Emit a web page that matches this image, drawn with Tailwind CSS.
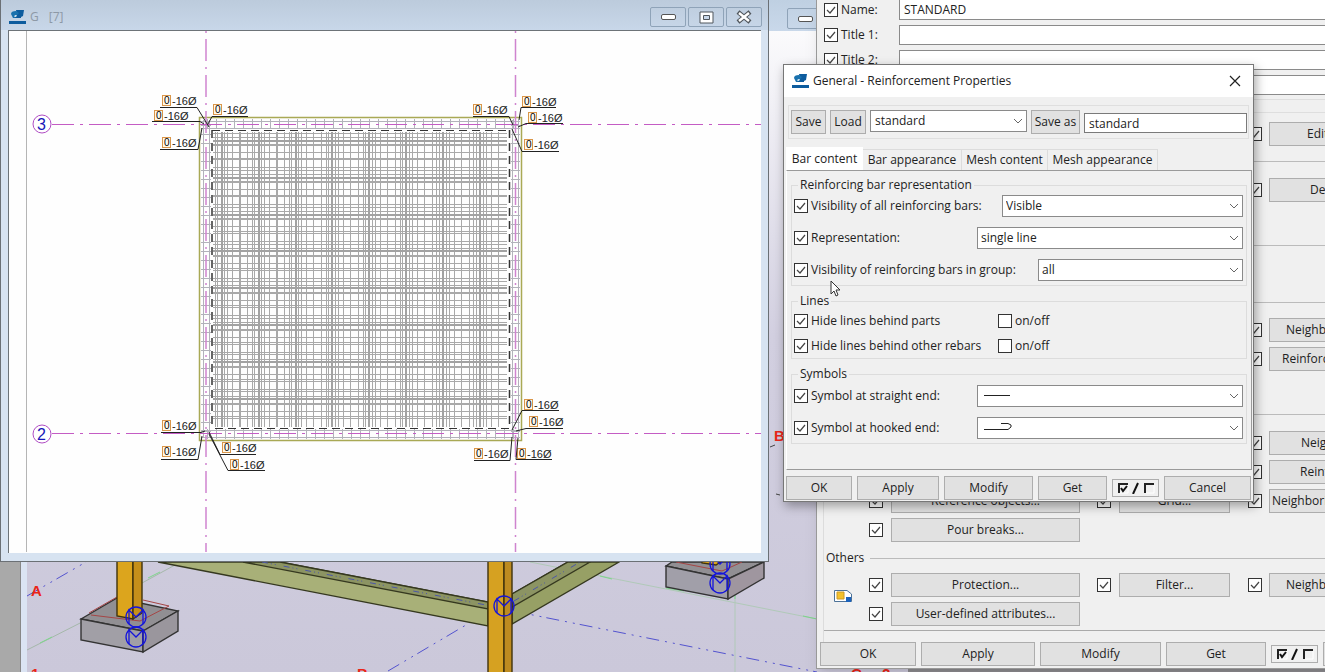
<!DOCTYPE html>
<html lang="en">
<head>
  <meta charset="UTF-8">
  <meta name="viewport" content="width=device-width, initial-scale=1.0">
  <title>General - Reinforcement Properties</title>
  <script src="https://cdn.jsdelivr.net/npm/@tailwindcss/browser@4"></script>
</head>
<body class="overflow-hidden font-['Open_Sans','Noto_Sans',sans-serif] text-xs text-[#222]">
  <!-- Shared icons -->
  <svg class="hidden">
    <symbol id="tick" viewBox="0 0 14 14"><path d="M3 7 L6 10 L11 4" fill="none" stroke="#444" stroke-width="1.2"/></symbol>
    <symbol id="chevron" viewBox="0 0 10 6"><path d="M1 1 L5 5 L9 1" fill="none" stroke="#666"/></symbol>
    <symbol id="logo" viewBox="0 0 17 15">
      <path d="M0 11h17v3H0z M7 0h8l-1 6-2 1v1H5V7l3-2z" fill="#0d5c9e"/>
      <path d="M2 4q0-3 5-3l3 2-3 3-1 2H4z" fill="#1a72ae"/>
      <path d="M5 6l2-1 1 1-2 1z" fill="#fff"/>
    </symbol>
    <symbol id="onoff" viewBox="0 0 38 12">
      <path d="M2 11V2h9 M28 11V2h9" fill="none" stroke="#222" stroke-width="2"/>
      <path d="M3 11h8V3 M29 11h8V3" fill="none" stroke="#fff"/>
      <path d="M4 6l2 3 4-5 M16 12l5-11" fill="none" stroke="#111" stroke-width="2"/>
    </symbol>
    <symbol id="node" viewBox="-12 -12 24 24">
      <circle r="10" fill="none" stroke="#1414dc" stroke-width="1.3"/>
      <path d="M-7 7V-7L0 0L7 -7V7" fill="none" stroke="#1414dc" stroke-width="1.3"/>
    </symbol>
  </svg>

  <main class="relative min-h-screen overflow-hidden bg-[#a9a9a9]">
    <!-- Model view -->
    <section class="absolute inset-y-0 left-5 right-0 bg-linear-to-b from-white via-[#d2cfe0] to-[#cbc8da] border-l border-[#888]">
      <div class="h-[31px] bg-linear-to-b from-[#bfd0e2] to-[#c9d8ea]">
        <button aria-label="Minimize model view" class="absolute left-[766px] top-2 w-9 h-[21px] border border-[#8fa3b8] rounded-xs grid place-items-center">
          <span class="w-[15px] h-[6px] border border-[#555] bg-white rounded-xs"></span>
        </button>
      </div>
      <div class="absolute left-0 top-0 bottom-0 w-[6px] bg-[#dbe4f3]"></div>
    </section>
    <svg class="absolute left-0 top-0" width="1325" height="672" aria-hidden="true">
      <g fill="none">
        <path d="M27 650L90 618M142 583L175 565" stroke="#a5b8aa"/>
        <path d="M40 643l12-6M148 578l12-6" stroke="#7dd68b"/>
        <path d="M530 562L817 619M735 585V672" stroke="#b0c9b8"/>
        <path d="M600 576l12 3M666 588l18 3M803 616l14 3M735 585v14" stroke="#7dd68b"/>
        <path d="M27 596L86 562M388 671L488 612M513 611L817 672" stroke="#5353cf" stroke-dasharray="13 6 2 6 2 5"/>
        <path d="M770 447l5-2M776 494l4 1" stroke="#444"/>
      </g>
      <g stroke="#35381f" stroke-width="1.4">
        <path d="M158 562H280L488 602V626Z" fill="#a8b078"/>
        <path d="M243 562H280L488 602V609Z" fill="#8c9463"/>
        <path d="M512 594L568 562H619L512 624Z" fill="#97a065"/>
        <path d="M512 594L568 562H590L512 607Z" fill="#8c9463"/>
      </g>
      <path d="M262 562L486 605M514 601L580 562" fill="none" stroke="#4c57a8" stroke-dasharray="6 3 1 3 1 8"/>
      <g stroke="#333" stroke-width="1.4">
        <path d="M81 619L117 598L178 611L143 631Z" fill="#918f93"/>
        <path d="M81 619L143 631V652L81 640Z" fill="#a19fa6"/>
        <path d="M143 631L178 611V631L143 652Z" fill="#9a969d"/>
        <path d="M666 566L672 562H764L728 579Z" fill="#918f93"/>
        <path d="M666 566L728 579V599L666 587Z" fill="#a19fa9"/>
        <path d="M728 579L764 562V578L728 599Z" fill="#9f969f"/>
      </g>
      <path d="M89 613L117 597M91 615L140 621L169 606L143 600M676 562L722 571L742 562" fill="none" stroke="#a54545"/>
      <g stroke="#3f320c" stroke-width="1.4">
        <path d="M117 555V616L133 619V555Z" fill="#dca51d"/>
        <path d="M133 555V619L142 613V555Z" fill="#c58f1a"/>
        <path d="M488 555V680H504V555Z" fill="#d6a121"/>
        <path d="M504 555V680H512V555Z" fill="#bd8b20"/>
        <path d="M702 555V563L716 565L722 561V555Z" fill="#dca51d"/>
      </g>
      <use href="#node" x="124" y="605" width="24" height="24"/>
      <use href="#node" x="124" y="625" width="24" height="24"/>
      <use href="#node" x="492" y="594" width="24" height="24"/>
      <use href="#node" x="708" y="552" width="24" height="24"/>
      <use href="#node" x="708" y="571" width="24" height="24"/>
      <g fill="#ea2518" class="font-['Liberation_Sans',sans-serif] text-[15px] font-bold">
        <text x="31" y="596">A</text>
        <text x="31" y="679">1</text>
        <text x="357" y="679">B</text>
        <text x="774" y="441">B</text>
        <text x="851" y="679">C</text>
        <text x="882" y="679">2</text>
      </g>
      <path d="M908 668H1325V672H908Z" fill="#8d8b8f"/>
    </svg>

    <!-- Drawing window -->
    <section class="absolute left-0 top-0 w-[769px] h-[562px] flex flex-col bg-[#d7e3f1] border border-t-0 border-[#6b7075] pl-[7px] pr-[7px] pb-2">
      <header class="-mx-[7px] h-[30px] shrink-0 flex items-center gap-1 pl-2 pr-[6px] pt-1 bg-linear-to-b from-[#bccbdc] to-[#c8d7e9] text-[#8d99a6]">
        <svg class="w-[17px] h-[15px]"><use href="#logo"/></svg>
        <h2 class="flex gap-[10px] text-xs"><span>G</span><span>[7]</span></h2>
        <div class="ml-auto flex gap-[2px]">
          <button aria-label="Minimize" class="w-9 h-5 border border-[#8fa3b8] rounded-xs grid place-items-center"><span class="w-[15px] h-[6px] border border-[#555] bg-white rounded-xs"></span></button>
          <button aria-label="Maximize" class="w-9 h-5 border border-[#8fa3b8] rounded-xs grid place-items-center">
            <svg width="15" height="13"><path d="M1 1h13v11H1z" fill="#fff" stroke="#50565c"/><path d="M4.500 4.500h6v4h-6z" fill="#c8d7e9" stroke="#50565c"/></svg>
          </button>
          <button aria-label="Close" class="w-9 h-5 border border-[#8fa3b8] rounded-xs grid place-items-center">
            <svg width="16" height="14"><path d="M2 2L14 12M14 2L2 12" stroke="#50565c" stroke-width="4.500"/><path d="M3 3L13 11M13 3L3 11" stroke="#fff" stroke-width="2.500"/></svg>
          </button>
        </div>
      </header>
      <div class="grow overflow-hidden border-t border-l border-t-[#6d7378] border-l-[#6d7378] bg-[#fefefe]">
        <svg id="sheet" width="753" height="522" viewBox="9 31 753 522" class="font-['Liberation_Sans',sans-serif]">
          <path d="M26.500 31V552" stroke="#b5b5b5"/>
          <path d="M199.500 117.500H521.500V440.500H199.500Z" fill="none" stroke="#a9a955" stroke-width="1.500"/>
          <g id="bars" shape-rendering="crispEdges"></g>
          <path d="M212 130.500H509M509 428.500H212" stroke="#333" stroke-dasharray="8 5"/>
          <path d="M212 130V428M509.500 130V428" stroke="#333" stroke-width="1.500" stroke-dasharray="8 5"/>
          <path d="M206 31V552M515.500 31V552" fill="none" stroke="#cf84cf" stroke-width="1.500" stroke-dasharray="22 6 2 6" stroke-dashoffset="28"/>
          <path d="M52 124.500H761M52 433.500H761" fill="none" stroke="#c45cc4" stroke-width="1.200" stroke-dasharray="22 6 3 6"/>
          <g fill="#fff" stroke="#b04cc4"><circle cx="42" cy="124" r="9"/><circle cx="42" cy="434" r="9"/></g>
          <g fill="#1616b8" font-size="16"><text x="37" y="130">3</text><text x="37" y="440">2</text></g>
          <g id="marks" font-size="11"></g>
        </svg>
      </div>
    </section>

    <!-- Drawing properties dialog -->
    <form class="absolute left-[816px] top-0 w-[660px] h-[669px] flex flex-col bg-[#f0f0f0] border-l border-b border-[#999] shadow-lg" onsubmit="return false">
      <div class="grid grid-cols-[14px_58px_1fr] gap-x-[3px] gap-y-[5px] pl-[7px] items-center">
        <span class="relative size-[14px]"><input type="checkbox" id="nameOn" checked class="peer appearance-none block size-[14px] border border-[#333] bg-white"><svg class="absolute inset-0 size-[14px] pointer-events-none hidden peer-checked:block"><use href="#tick"/></svg></span>
        <label for="nameOn">Name:</label>
        <input type="text" aria-label="Name" value="STANDARD" class="h-5 px-1 border border-t-0 border-[#8a8a8a] bg-white -ml-[3px]">
        <span class="relative size-[14px]"><input type="checkbox" id="title1On" checked class="peer appearance-none block size-[14px] border border-[#333] bg-white"><svg class="absolute inset-0 size-[14px] pointer-events-none hidden peer-checked:block"><use href="#tick"/></svg></span>
        <label for="title1On">Title 1:</label>
        <input type="text" aria-label="Title 1" class="h-5 px-1 border border-[#8a8a8a] bg-white -ml-[3px]">
        <span class="relative size-[14px]"><input type="checkbox" id="title2On" checked class="peer appearance-none block size-[14px] border border-[#333] bg-white"><svg class="absolute inset-0 size-[14px] pointer-events-none hidden peer-checked:block"><use href="#tick"/></svg></span>
        <label for="title2On">Title 2:</label>
        <input type="text" aria-label="Title 2" class="h-5 px-1 border border-[#8a8a8a] bg-white -ml-[3px]">
        <input type="text" aria-label="Title 3" class="col-start-3 h-5 px-1 border border-[#8a8a8a] bg-white -ml-[3px]">
      </div>
      <div class="mx-[6px] mt-1 h-[14px] border-y border-[#dedede]"></div>
      <div id="sections" class="ml-[6px] border-l border-[#dcdcdc] grow"></div>
      <footer class="mt-auto flex items-center gap-[5px] pl-[3px] pb-[2px]">
        <button class="w-24 h-6 border border-[#adadad] bg-[#e1e1e1]">OK</button>
        <button class="w-[114px] h-6 border border-[#adadad] bg-[#e1e1e1]">Apply</button>
        <button class="w-[121px] h-6 border border-[#adadad] bg-[#e1e1e1]">Modify</button>
        <button class="w-[100px] h-6 border border-[#adadad] bg-[#e1e1e1]">Get</button>
        <button aria-label="Toggle all" class="w-[47px] h-[18px] border border-[#adadad] grid place-items-center"><svg class="w-[38px] h-3"><use href="#onoff"/></svg></button>
        <button aria-label="Cancel drawing properties" class="w-24 h-6 border border-[#adadad] bg-[#e1e1e1]"></button>
      </footer>
    </form>

    <!-- Reinforcement properties dialog -->
    <form class="absolute left-[783px] top-16 w-[471px] bg-[#f0f0f0] border border-[#777] shadow-[2px_4px_10px_rgba(0,0,0,0.35)]" onsubmit="return false">
      <header class="h-8 bg-white flex items-center gap-1 pl-2 pr-3">
        <svg class="w-[17px] h-[15px]"><use href="#logo"/></svg>
        <h1>General - Reinforcement Properties</h1>
        <button aria-label="Close dialog" class="ml-auto"><svg width="12" height="12"><path d="M1 1L11 11M11 1L1 11" stroke="#222" stroke-width="1.200"/></svg></button>
      </header>
      <div class="mx-1 mt-2 h-[34px] flex items-start gap-1 pt-1 pl-[2px] pr-px border border-[#dfdfdf]">
        <button class="w-[35px] h-6 border border-[#adadad] bg-[#e1e1e1]">Save</button>
        <button class="w-9 h-6 border border-[#adadad] bg-[#e1e1e1]">Load</button>
        <div class="relative grow">
          <select aria-label="Saved settings" class="appearance-none block w-full h-[22px] px-1 border border-[#8a8a8a] bg-white"><option>standard</option></select>
          <svg class="absolute right-1 top-2 w-[10px] h-[6px] pointer-events-none"><use href="#chevron"/></svg>
        </div>
        <button class="w-[49px] h-6 border border-[#adadad] bg-[#e1e1e1] whitespace-nowrap">Save as</button>
        <input type="text" aria-label="Save as name" value="standard" class="w-[163px] h-5 mt-[3px] px-1 border border-[#7a7a7a] bg-white">
      </div>
      <nav class="mt-2 ml-[2px] flex items-end whitespace-nowrap">
        <button class="h-[23px] w-[77px] bg-white">Bar content</button>
        <button class="h-[21px] w-[99px] border-t border-r border-[#dcdcdc]">Bar appearance</button>
        <button class="h-[21px] w-[86px] border-t border-r border-[#dcdcdc]">Mesh content</button>
        <button class="h-[21px] w-[110px] border-t border-r border-[#dcdcdc]">Mesh appearance</button>
      </nav>
      <div class="ml-[2px] mr-[1px] border border-l-white border-[#9a9a9a] px-1 pt-[5px] pb-[25px]">
        <fieldset class="border border-[#dcdcdc] pl-[2px] pr-[3px] pb-1">
          <legend class="ml-1 px-[2px] h-[18px] leading-[18px]">Reinforcing bar representation</legend>
          <div id="barRows" class="flex flex-col gap-[10px] pt-[1px]"></div>
        </fieldset>
        <fieldset class="mt-[6px] border border-[#dcdcdc] pl-[2px] pr-[3px] pb-1">
          <legend class="ml-1 px-[2px] h-[18px] leading-[18px]">Lines</legend>
          <div id="lineRows" class="flex flex-col gap-[9px] pt-[3px]"></div>
        </fieldset>
        <fieldset class="mt-[6px] border border-[#dcdcdc] pl-[2px] pr-[3px] pb-1">
          <legend class="ml-1 px-[2px] h-[18px] leading-[18px]">Symbols</legend>
          <div id="symbolRows" class="flex flex-col gap-[10px] pt-[2px]"></div>
        </fieldset>
      </div>
      <footer class="flex items-center gap-[5px] px-[2px] pt-[6px] pb-[1px]">
        <button class="w-[66px] h-6 border border-[#adadad] bg-[#e1e1e1]">OK</button>
        <button class="w-[82px] h-6 border border-[#adadad] bg-[#e1e1e1]">Apply</button>
        <button class="w-[89px] h-6 border border-[#adadad] bg-[#e1e1e1]">Modify</button>
        <button class="w-[69px] h-6 border border-[#adadad] bg-[#e1e1e1]">Get</button>
        <button aria-label="Toggle all settings" class="w-[47px] h-[18px] border border-[#adadad] grid place-items-center"><svg class="w-[38px] h-3"><use href="#onoff"/></svg></button>
        <button class="grow h-6 border border-[#adadad] bg-[#e1e1e1]">Cancel</button>
      </footer>
    </form>

    <!-- Mouse pointer -->
    <svg class="absolute left-[830px] top-[280px]" width="12" height="18"><path d="M1 1V14L4 11L6 16L8 15L6 10H10Z" fill="#fff" stroke="#333"/></svg>
  </main>

  <script>
    let boxCount = 0;

    function checkbox(label, checked = true) {
      const id = 'box' + boxCount++;
      return `<span class="flex items-center gap-[3px]">
        <span class="relative size-[14px] shrink-0">
          <input type="checkbox" id="${id}" ${checked ? 'checked' : ''} class="peer appearance-none block size-[14px] border border-[#333] bg-white">
          <svg class="absolute inset-0 size-[14px] pointer-events-none hidden peer-checked:block"><use href="#tick"/></svg>
        </span>
        <label for="${id}" class="whitespace-nowrap">${label}</label>
      </span>`;
    }

    function dropdown(label, value, width, icon = '') {
      return `<div class="flex items-center justify-between">
        ${checkbox(label)}
        <div class="relative" style="width: ${width}px">
          <select aria-label="${label}" class="appearance-none block w-full h-[22px] px-[3px] border border-[#8a8a8a] bg-white"><option>${value}</option></select>
          ${icon}
          <svg class="absolute right-1 top-2 w-[10px] h-[6px] pointer-events-none"><use href="#chevron"/></svg>
        </div>
      </div>`;
    }

    const straight = '<svg class="absolute left-[7px] top-[5px] pointer-events-none" width="28" height="11"><path d="M0 5.500H26" stroke="#222"/></svg>';
    const hooked = '<svg class="absolute left-[7px] top-[5px] pointer-events-none" width="28" height="11"><path d="M0 7.500H24L27 5V3L24 1.500H17" fill="none" stroke="#222"/></svg>';

    document.getElementById('barRows').innerHTML =
      dropdown('Visibility of all reinforcing bars:', 'Visible', 241) +
      dropdown('Representation:', 'single line', 266) +
      dropdown('Visibility of reinforcing bars in group:', 'all', 205);
    document.getElementById('lineRows').innerHTML =
      ['Hide lines behind parts', 'Hide lines behind other rebars'].map(t =>
        `<div class="grid grid-cols-[204px_1fr]">${checkbox(t)}${checkbox('on/off', false)}</div>`).join('');
    document.getElementById('symbolRows').innerHTML =
      dropdown('Symbol at straight end:', '', 266, straight) +
      dropdown('Symbol at hooked end:', '', 266, hooked);

    // left, middle and right button of a row; indent is the right button's text inset
    function row(left, middle, right, indent) {
      const cell = (col, text, body) => text ? `<span class="${col}">${checkbox('')}</span>${body}` : '';
      return `<div class="grid grid-cols-[22px_206px_22px_129px_21px_188px] items-center h-6">
        ${cell('col-start-1', left, `<button class="w-[189px] h-6 border border-[#adadad] bg-[#e1e1e1]">${left}</button>`)}
        ${cell('col-start-3', middle, `<button class="w-[111px] h-6 border border-[#adadad] bg-[#e1e1e1]">${middle}</button>`)}
        ${cell('col-start-5', right, `<button class="h-6 border border-[#adadad] bg-[#e1e1e1] text-left whitespace-nowrap overflow-hidden" style="padding-left: ${indent}px">${right}</button>`)}
      </div>`;
    }

    document.getElementById('sections').innerHTML = `
      <div class="pl-[45px] pt-[9px] pb-[15px] border-b border-[#bbb]">${row('', '', 'Edit settings...', 37)}</div>
      <div class="pl-[45px] pt-4 pb-[43px] border-b border-[#bbb]">${row('', '', 'Detail object...', 40)}</div>
      <div class="h-[57px] border-b border-[#bbb]"></div>
      <div class="pl-[45px] pt-[15px] pb-[43px] border-b border-[#bbb] flex flex-col gap-[5px]">
        ${row('', '', 'Neighboring parts...', 16)}${row('', '', 'Reinforcement...', 12)}
      </div>
      <div class="pl-[45px] pt-4 flex flex-col gap-[5px]">
        ${row('', '', 'Neighbors...', 31)}${row('', '', 'Reinforcing...', 30)}
        ${row('Reference objects...', 'Grid...', 'Neighboring reinforcement...', 2)}${row('Pour breaks...', '', '', 0)}
      </div>
      <div class="mt-[7px] pl-[2px] flex items-center gap-[6px] h-[18px]"><h3>Others</h3><span class="grow h-px bg-[#bbb]"></span></div>
      <div class="mt-[6px] pb-1 border-b border-[#aaa] flex items-start">
        <svg class="w-[45px] h-5 mt-[13px]" viewBox="0 0 45 20">
          <path d="M10.500 4.500H23L27.500 8V15.500H10.500Z" fill="#fff" stroke="#4d7298"/>
          <path d="M13 6h7v7h-7z" fill="#f3c12c" stroke="#c99a28"/><path d="M22 11h5v5h-5z" fill="#1b62bb"/>
        </svg>
        <div class="flex flex-col gap-[5px]">
          ${row('Protection...', 'Filter...', 'Neighboring views...', 16)}${row('User-defined attributes...', '', '', 0)}
        </div>
      </div>`;

    // Reinforcement mesh
    const bars = document.getElementById('bars');
    let meshPath = '', heavyPath = '', edgePath = '';
    for (let i = 0; i < 24; i++) {
      const d = Math.round(i * 12.3) + 0.5;
      meshPath += `M${215 + d} 132V427M213 ${133 + d}H507`;
    }
    for (let d = 3; d < 290; d += 7.4) {
      const p = Math.round(d) + 0.5;
      meshPath += `M${214 + p} 132V427M213 ${134 + p}H507`;
    }
    for (let d = 9; d < 292; d += 36.8) {
      const p = Math.round(d);
      heavyPath += `M${237 + p - 24} 132V427M213 ${132 + p}H507`;
    }
    for (let d = 2; d < 310; d += 9) {
      edgePath += `M${205.5 + d} 119V129M${205.5 + d} 429V439M201 ${123.5 + d}H211M511 ${123.5 + d}H520`;
    }
    edgePath += 'M203.500 120V438M209.500 120V438M512.500 120V438M518.500 120V438M201 121.500H520M201 128.500H520M201 430.500H520M201 437.500H520';
    bars.innerHTML = `<path d="${meshPath}" stroke="#a9a9a9" fill="none"/>
      <path d="${heavyPath}" stroke="#a2a2a2" stroke-width="2" fill="none"/>
      <path d="${edgePath}" stroke="#b2b2ba" fill="none"/>`;

    // Bar marks: box x, box y, line from, line to, line y, leader start x, leader end x, leader end y
    const marks = [
      [162, 95, 160, 197, 107, 197, 209, 127],
      [154, 110, 152, 200, 121, 200, 204, 124],
      [162, 137, 160, 198, 149, 198, 202, 128],
      [213, 104, 212, 248, 116, 212, 208, 124],
      [473, 104, 473, 509, 116, 509, 513, 125],
      [522, 96, 521, 556, 107, 521, 519, 120],
      [528, 112, 526, 563, 123, 526, 518, 127],
      [524, 139, 522, 559, 151, 522, 512, 129],
      [162, 420, 161, 201, 432, 201, 205, 431],
      [162, 446, 161, 198, 459, 198, 202, 436],
      [222, 442, 220, 256, 454, 220, 209, 432],
      [230, 459, 228, 265, 470, 228, 209, 434],
      [474, 448, 474, 510, 460, 510, 512, 437],
      [517, 448, 516, 552, 459, 516, 518, 438],
      [524, 399, 522, 559, 410, 522, 512, 430],
      [529, 416, 526, 563, 428, 526, 516, 431]
    ];
    document.getElementById('marks').innerHTML = marks.map(([x, y, x1, x2, ly, sx, ex, ey]) => `
      <rect x="${x + 0.5}" y="${y + 0.5}" width="8" height="10" fill="#fff8ea" stroke="#d9964a"/>
      <text x="${x + 2}" y="${y + 9}" font-size="10">0</text>
      <text x="${x + 10}" y="${y + 10}" fill="#222">-16Ø</text>
      <path d="M${x1} ${ly + 0.5}H${x2}M${sx} ${ly + 0.5}L${ex} ${ey}" stroke="#222" fill="none"/>`).join('');
  </script>
</body>
</html>
